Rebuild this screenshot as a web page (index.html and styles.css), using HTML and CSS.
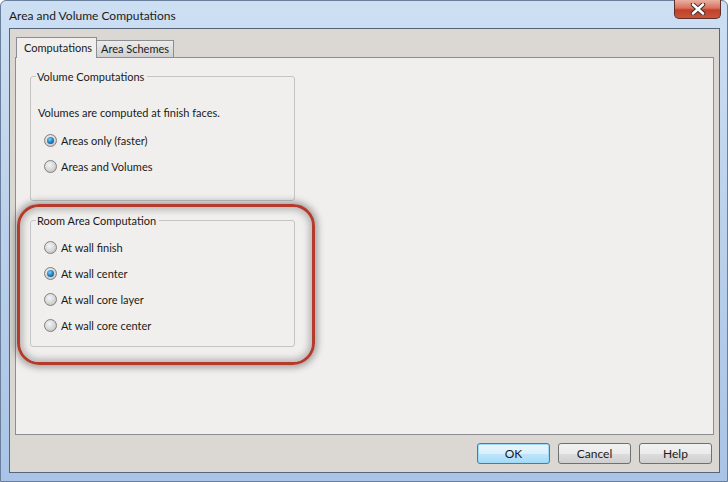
FILE: index.html
```html
<!DOCTYPE html>
<html lang="en">
<head>
    <meta charset="UTF-8">
    <title>Area and Volume Computations</title>
    <link rel="stylesheet" href="styles.css">
</head>
<body>
    <div class="window">
        <div class="titlebar">
            <span class="title">Area and Volume Computations</span>
            <div class="close">
                <svg width="20" height="12" viewBox="0 0 20 12">
                    <path d="M5 1.5 L15 10.5 M15 1.5 L5 10.5" stroke="#3a2a28" stroke-width="4.4" stroke-linecap="round"/>
                    <path d="M5 1.5 L15 10.5 M15 1.5 L5 10.5" stroke="#ffffff" stroke-width="2.6" stroke-linecap="round"/>
                </svg>
            </div>
        </div>
        <div class="client">
            <div class="tabs">
                <div class="tab active">Computations</div>
                <div class="tab">Area Schemes</div>
            </div>
            <div class="panel">
                <!-- volume group -->
                <fieldset class="group vol">
                    <legend>Volume Computations</legend>
                    <div class="row note">Volumes are computed at finish faces.</div>
                    <label class="row radio"><span class="dot checked"></span>Areas only (faster)</label>
                    <label class="row radio"><span class="dot"></span>Areas and Volumes</label>
                </fieldset>
                <!-- red marker round the room group -->
                <div class="highlight">
                    <fieldset class="group room">
                        <legend>Room Area Computation</legend>
                        <label class="row radio"><span class="dot"></span>At wall finish</label>
                        <label class="row radio"><span class="dot checked"></span>At wall center</label>
                        <label class="row radio"><span class="dot"></span>At wall core layer</label>
                        <label class="row radio"><span class="dot"></span>At wall core center</label>
                    </fieldset>
                </div>
            </div>
            <div class="buttons">
                <div class="btn default">OK</div>
                <div class="btn">Cancel</div>
                <div class="btn">Help</div>
            </div>
        </div>
    </div>
</body>
</html>
```
FILE: styles.css
```css
* {
    margin: 0;
    padding: 0;
    box-sizing: border-box;
}
body {
    font-family: Lato, "Open Sans", sans-serif;
    font-size: 11px;
    color: #1a1a1a;
    background: #fff;
}
/* window frame */
.window {
    width: 728px;
    height: 482px;
    display: flex;
    flex-direction: column;
    padding: 0 7px 8px 8px;
    border-radius: 6px 6px 0 0;
    border: 1px solid #6a7f9c;
    background: linear-gradient(180deg, #cddff3 0%, #bed3ec 40%, #a9c4e6 100%);
}
.titlebar {
    height: 27px;
    display: flex;
    justify-content: space-between;
    align-items: flex-start;
}
.title {
    font-size: 12px;
    line-height: 29px;
    color: #1b1b1b;
}
.close {
    width: 47px;
    height: 19px;
    margin-top: -1px;
    margin-right: -1px;
    display: flex;
    align-items: center;
    justify-content: center;
    border: 1px solid #5d2f2a;
    border-top: none;
    border-radius: 0 0 5px 5px;
    background: linear-gradient(180deg, #eab0a2 0%, #d7715d 45%, #c2402a 55%, #c8553c 100%);
}
/* client area */
.client {
    flex: 1;
    display: flex;
    flex-direction: column;
    padding: 8px 5px 7px 5px;
    border: 1px solid #55657a;
    background: #dbd8d4;
}
.tabs {
    display: flex;
    align-items: flex-end;
    height: 20px;
    padding-left: 1px;
}
.tab {
    height: 17px;
    padding: 0 4px;
    line-height: 16px;
    border: 1px solid #8c8e94;
    border-bottom: none;
    background: linear-gradient(180deg, #ececec 0%, #dedede 50%, #d0d0d0 100%);
    margin-left: -1px;
}
.tab.active {
    height: 21px;
    width: 81px;
    padding: 0 0 0 7px;
    margin: 0 0 -1px 0;
    line-height: 19px;
    background: #f0efed;
    position: relative;
    z-index: 1;
}
.panel {
    flex: 1;
    border: 1px solid #8c8e94;
    background: #f0efed;
    padding: 11px 0 0 14px;
}
/* group boxes */
.group {
    width: 265px;
    border: 1px solid #c4c4c4;
    border-radius: 3px;
    padding: 15px 0 21px 7px;
}
.group legend {
    margin-left: -2px;
    padding: 0 3px 0 1px;
    line-height: 15px;
}
.row {
    display: flex;
    align-items: center;
    height: 26px;
}
.note {
    margin-bottom: 2px;
}
.radio {
    padding-left: 6px;
}
.dot {
    width: 13px;
    height: 13px;
    margin-right: 4px;
    border-radius: 50%;
    border: 1px solid #7f8080;
    background: radial-gradient(circle at 40% 35%, #f4f4f4 0%, #d6d6d6 55%, #b4b4b4 100%);
    display: flex;
    align-items: center;
    justify-content: center;
}
.dot.checked::after {
    content: "";
    width: 7px;
    height: 7px;
    border-radius: 50%;
    background: radial-gradient(circle at 40% 35%, #7fd0f5 0%, #2a86c2 45%, #0b3b66 100%);
}
.highlight {
    width: 298px;
    margin: 3px 0 0 -13px;
    padding: 6px 0 15px 10px;
    border: 3px solid #b43a2b;
    border-radius: 22px;
    box-shadow: 0 0 6px 3px rgba(80, 80, 80, .45), inset 0 0 6px 3px rgba(80, 80, 80, .35);
}
.group.room {
    padding: 6px 0 8px 7px;
}
/* dialog buttons */
.buttons {
    display: flex;
    justify-content: flex-end;
    gap: 8px;
    margin-top: 8px;
    height: 22px;
    padding-right: 2px;
}
.btn {
    width: 73px;
    height: 21px;
    line-height: 19px;
    text-align: center;
    font-size: 12px;
    border: 1px solid #707070;
    border-radius: 3px;
    background: linear-gradient(180deg, #f2f2f2 0%, #ebebeb 50%, #dddddd 51%, #cfcfcf 100%);
}
.btn.default {
    border-color: #3c7fb1;
    box-shadow: inset 0 0 0 1px #9edaf5;
    background: linear-gradient(180deg, #eaf6fd 0%, #d9f0fc 50%, #bee6fd 51%, #a7d9f5 100%);
}
```
